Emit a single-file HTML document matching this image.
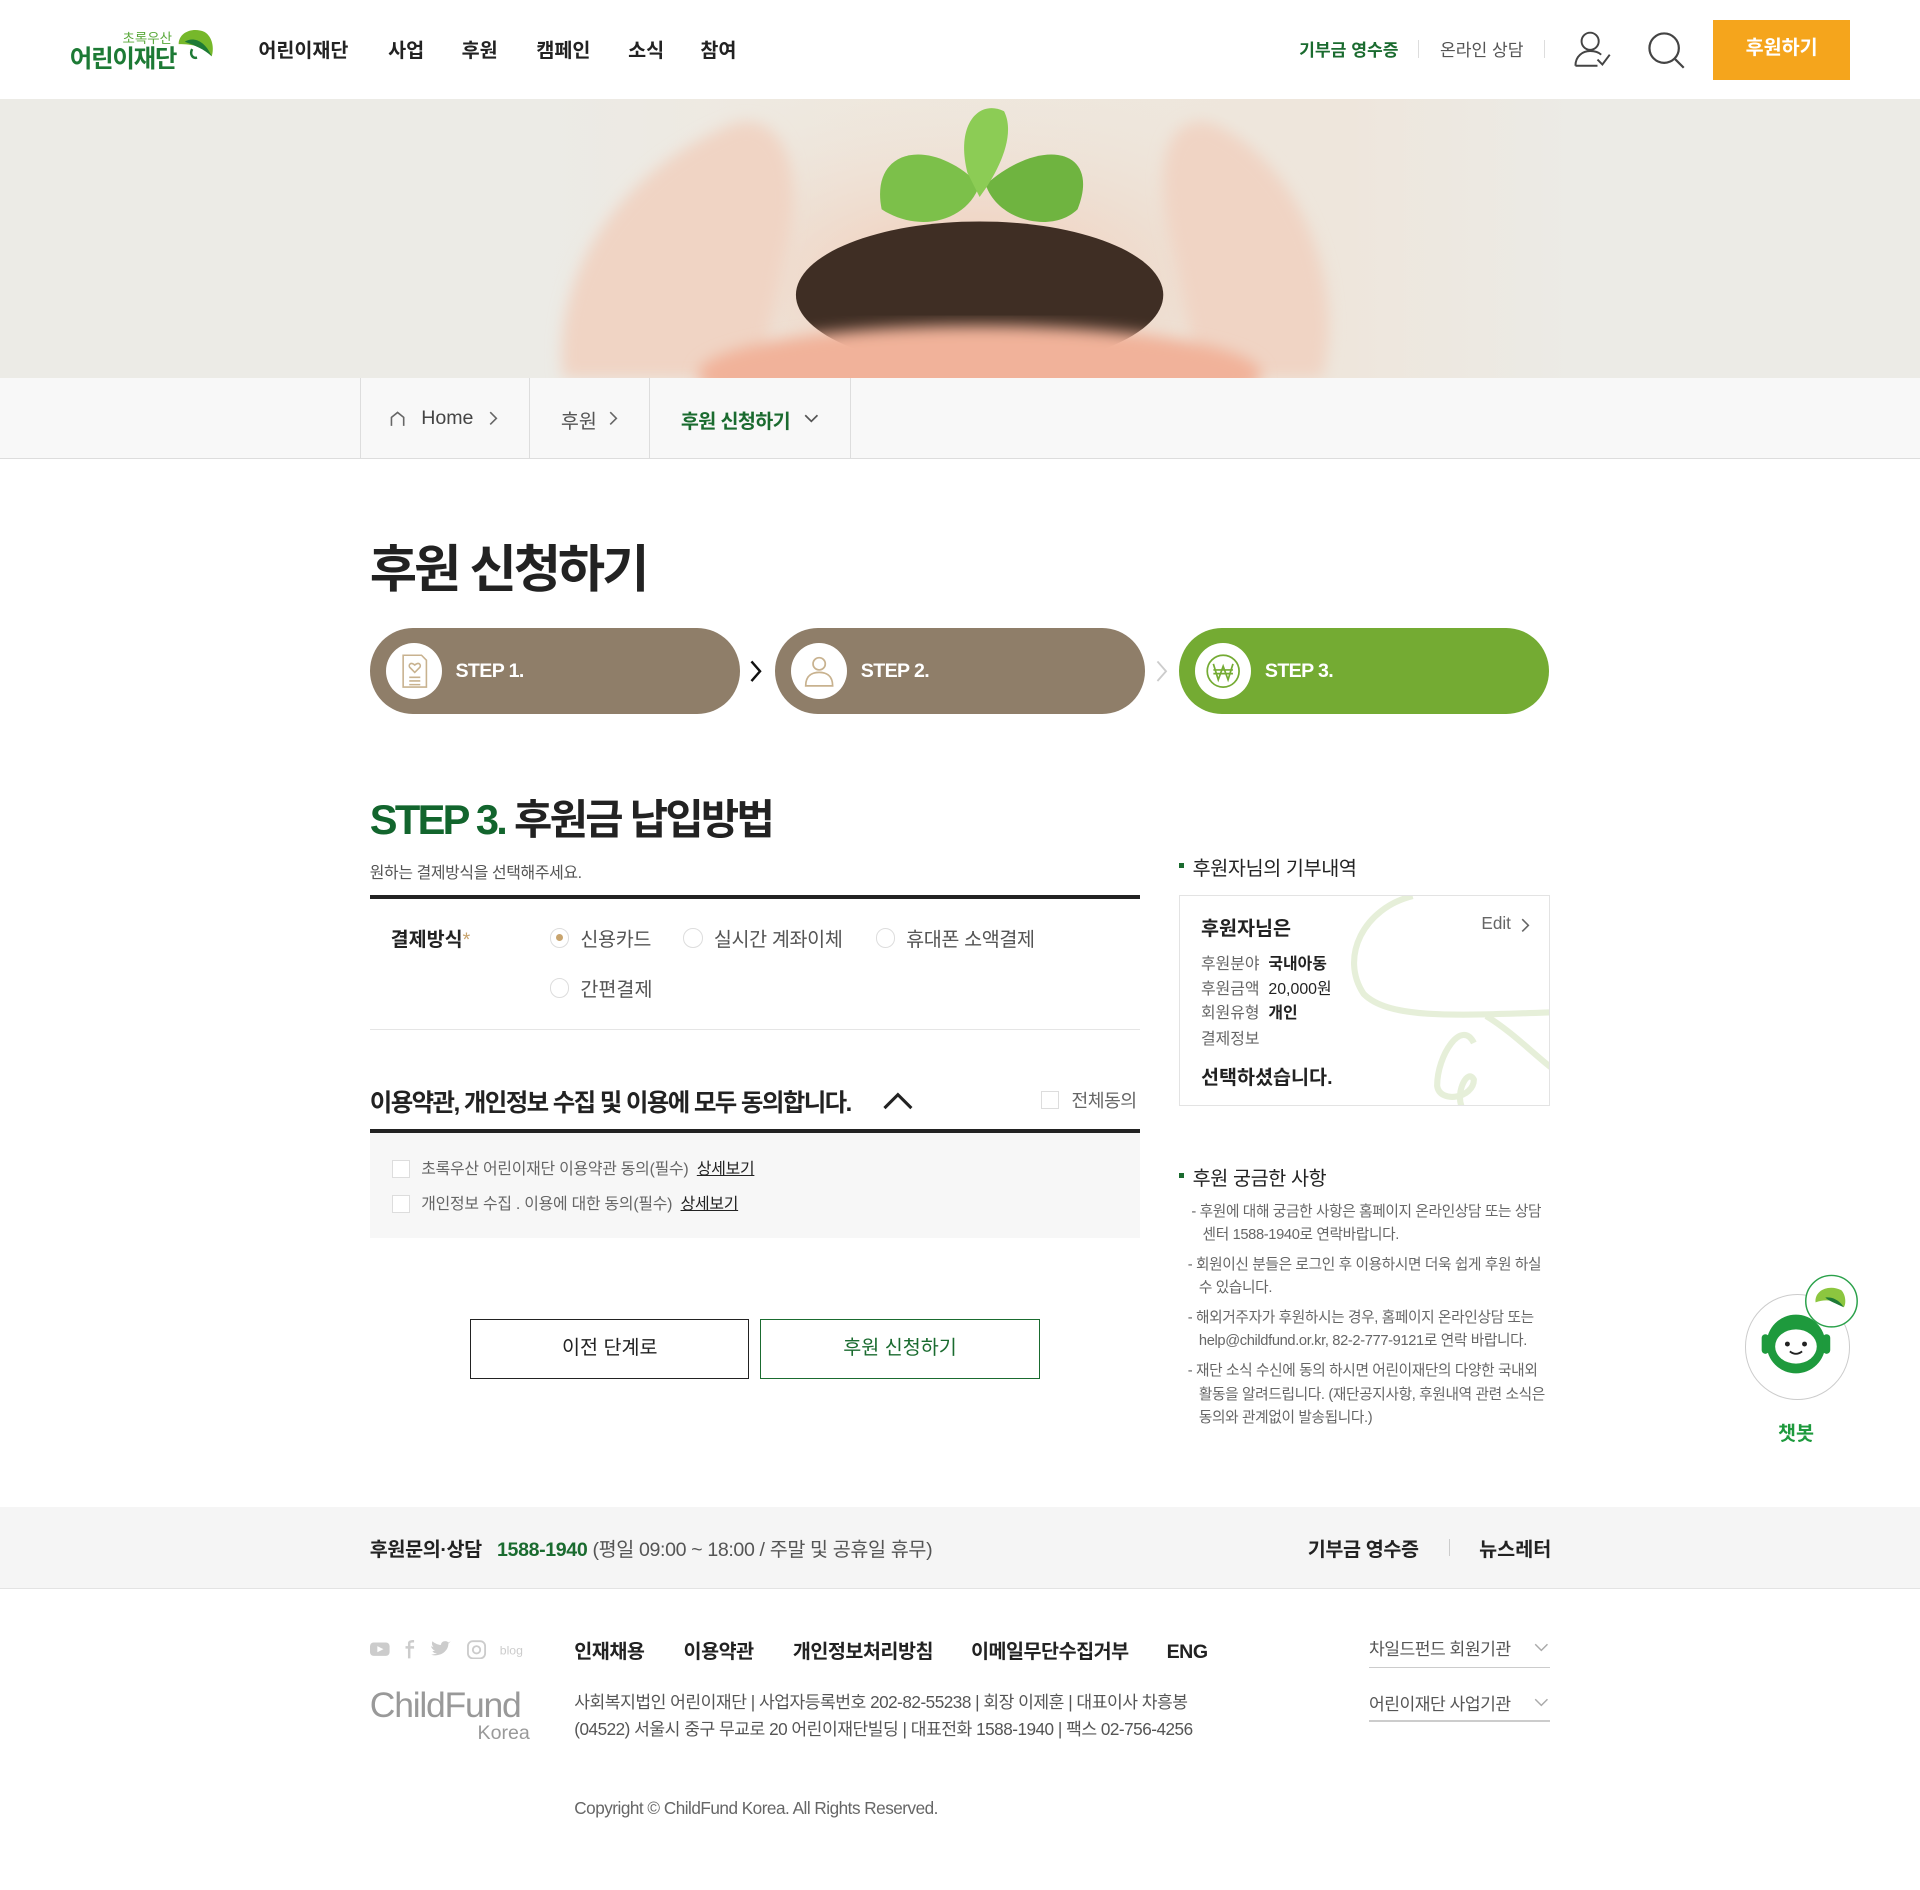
<!DOCTYPE html>
<html><head><meta charset="utf-8"><style>
*{margin:0;padding:0;box-sizing:border-box}
html,body{width:1920px;height:1890px;overflow:hidden;background:#fff}
#w{zoom:1.22449;width:1568px;height:1544px;position:relative;font-family:"Liberation Sans","Noto Sans CJK KR",sans-serif;color:#222}
.a{position:absolute;white-space:nowrap}
.nav{font-size:16px;font-weight:bold;top:28px;color:#222}
.pill{position:absolute;top:513px;height:70px;width:302px;border-radius:35px;background:#8f7e69}
.pill .c{position:absolute;left:13px;top:12px;width:46px;height:46px;border-radius:50%;background:#fff}
.pill .t{position:absolute;left:70px;top:26px;color:#fff;font-weight:bold;font-size:16px;letter-spacing:-0.5px}
.rad{position:absolute;width:16px;height:16px;border:1px solid #ddd;border-radius:50%;background:#fff}
.cb{position:absolute;width:15px;height:15px;border:1px solid #ddd;background:#fff}
.q{font-size:12px;color:#666;line-height:19px;letter-spacing:-0.3px}
</style></head><body><div id="w">
<!-- header -->
<div class="a" style="left:100px;top:22px;font-size:11px;color:#59a83a">초록우산</div>
<div class="a" style="left:57px;top:33px;font-size:20px;font-weight:bold;color:#1d7a35;letter-spacing:-1px">어린이재단</div>
<svg class="a" style="left:143px;top:22px" width="34" height="28"><path d="M3 14 C3 4 15 0 24 4 C31 8 32 18 30 24 C25 16 14 14 3 14Z" fill="#76b82a"/><path d="M8 12 C14 8 24 10 30 24 C24 18 16 15 8 12Z" fill="#1d7a35"/><path d="M14 18 C12 22 14 26 18 25" stroke="#1d7a35" stroke-width="2" fill="none"/></svg>
<div class="a nav" style="left:211px">어린이재단</div>
<div class="a nav" style="left:317px">사업</div>
<div class="a nav" style="left:377px">후원</div>
<div class="a nav" style="left:438px">캠페인</div>
<div class="a nav" style="left:513px">소식</div>
<div class="a nav" style="left:572px">참여</div>
<div class="a" style="left:1061px;top:29px;font-size:14px;font-weight:bold;color:#1a6b2f">기부금 영수증</div>
<div class="a" style="left:1158px;top:33px;width:1px;height:14px;background:#ddd"></div>
<div class="a" style="left:1176px;top:29px;font-size:14px;color:#555">온라인 상담</div>
<div class="a" style="left:1261px;top:33px;width:1px;height:14px;background:#ddd"></div>
<svg class="a" style="left:1285px;top:24px" width="32" height="32" fill="none" stroke="#444" stroke-width="1.6"><circle cx="14" cy="10" r="7"/><path d="M2 30 C2 22 8 18 14 18 C18 18 21 19 23 21"/><path d="M2 30 H20"/><path d="M20 25 L24 29 L30 21"/></svg>
<svg class="a" style="left:1345px;top:25px" width="32" height="32" fill="none" stroke="#444" stroke-width="1.8"><circle cx="14" cy="14" r="12"/><path d="M23 23 L30 30"/></svg>
<div class="a" style="left:1399px;top:16px;width:112px;height:49px;background:#f5a51c;color:#fff;font-weight:bold;font-size:16px;text-align:center;line-height:47px">후원하기</div>
<!-- hero -->
<div class="a" style="left:0;top:81px;width:1568px;height:228px;overflow:hidden;background:linear-gradient(90deg,#ecebe6 0%,#ecebe6 28%,#efe8de 45%,#eee6dc 70%,#ecebe6 82%,#ecebe6 100%)">
<svg width="1568" height="228">
<defs><radialGradient id="sk" cx="50%" cy="50%" r="50%"><stop offset="0" stop-color="#f2c6b0"/><stop offset="1" stop-color="#ece6dc" stop-opacity="0"/></radialGradient>
<filter id="bl"><feGaussianBlur stdDeviation="6"/></filter></defs>
<ellipse cx="790" cy="150" rx="340" ry="170" fill="url(#sk)"/>
<g filter="url(#bl)">
<path d="M460 228 C450 150 500 60 600 20 C640 10 660 60 640 130 C630 180 620 228 620 228Z" fill="#f0d4c4"/>
<path d="M1080 228 C1100 150 1060 50 990 20 C950 10 940 60 960 130 C970 180 980 228 980 228Z" fill="#f0d4c4"/>
</g>
<ellipse cx="800" cy="160" rx="150" ry="60" fill="#3f2e24"/>
<ellipse cx="800" cy="225" rx="230" ry="40" fill="#f1b29a" filter="url(#bl)"/>
<path d="M720 90 C710 40 760 30 800 70 C790 100 750 110 720 90Z" fill="#7cc04a"/>
<path d="M880 90 C900 40 850 30 805 70 C815 100 860 110 880 90Z" fill="#6fb440"/>
<path d="M790 60 C780 20 800 0 820 10 C830 30 815 60 800 80Z" fill="#8ccc55"/>
</svg></div>
<!-- breadcrumb -->
<div class="a" style="left:0;top:309px;width:1568px;height:66px;background:#f8f8f8;border-bottom:1px solid #ddd"></div>
<div class="a" style="left:294px;top:309px;width:1px;height:65px;background:#ddd"></div>
<div class="a" style="left:432px;top:309px;width:1px;height:65px;background:#ddd"></div>
<div class="a" style="left:530px;top:309px;width:1px;height:65px;background:#ddd"></div>
<div class="a" style="left:694px;top:309px;width:1px;height:65px;background:#ddd"></div>
<svg class="a" style="left:318px;top:335px" width="14" height="14" fill="none" stroke="#666" stroke-width="1.3"><path d="M2 13 V6 L7 2 L12 6 V13"/></svg>
<div class="a" style="left:344px;top:332px;font-size:16px;color:#444">Home</div>
<svg class="a" style="left:399px;top:336px" width="8" height="12" fill="none" stroke="#666" stroke-width="1.3"><path d="M1 1 L6 6 L1 11"/></svg>
<div class="a" style="left:458px;top:331px;font-size:16px;color:#555">후원</div>
<svg class="a" style="left:497px;top:336px" width="8" height="12" fill="none" stroke="#666" stroke-width="1.3"><path d="M1 1 L6 6 L1 11"/></svg>
<div class="a" style="left:556px;top:331px;font-size:16px;color:#1a6b2f;font-weight:bold;letter-spacing:-0.5px">후원 신청하기</div>
<svg class="a" style="left:657px;top:338px" width="12" height="8" fill="none" stroke="#555" stroke-width="1.4"><path d="M1 1 L6 6 L11 1"/></svg>
<!-- title -->
<div class="a" style="left:302px;top:430px;font-size:42px;font-weight:bold;color:#222;letter-spacing:-2.5px">후원 신청하기</div>
<div class="pill" style="left:302px"><div class="c"><svg width="46" height="46" fill="none" stroke="#c8b28f" stroke-width="1.3"><path d="M14 10 H29 L33 14 V36 H14Z"/><path d="M19 28 H28 M19 31 H28 M19 34 H28"/><path d="M23.5 24 L19.5 20 C18 18 20 15 23.5 18 C27 15 29 18 27.5 20Z"/></svg></div><div class="t">STEP 1.</div></div>
<div class="pill" style="left:633px"><div class="c"><svg width="46" height="46" fill="none" stroke="#c8b28f" stroke-width="1.4"><circle cx="23" cy="17" r="5"/><path d="M12 35 C12 26 18 24 23 24 C28 24 34 26 34 35Z"/></svg></div><div class="t">STEP 2.</div></div>
<div class="pill" style="left:963px;background:#74ab33"><div class="c"><svg width="46" height="46" fill="none" stroke="#74ab33" stroke-width="1.4"><circle cx="23" cy="23" r="13"/><path d="M15 17 L19 30 L23 19 L27 30 L31 17 M15 22 H31 M15 25 H31"/></svg></div><div class="t">STEP 3.</div></div>
<svg class="a" style="left:612px;top:538px" width="12" height="20" fill="none" stroke="#111" stroke-width="2"><path d="M2 2 L9 10 L2 18"/></svg>
<svg class="a" style="left:943px;top:538px" width="12" height="20" fill="none" stroke="#ccc" stroke-width="1.5"><path d="M2 2 L9 10 L2 18"/></svg>
<!-- step3 -->
<div class="a" style="left:302px;top:642px;font-size:34px;font-weight:bold;letter-spacing:-2.2px"><span style="color:#12652d">STEP 3.</span> 후원금 납입방법</div>
<div class="a" style="left:302px;top:702px;font-size:13px;color:#555;letter-spacing:-0.3px">원하는 결제방식을 선택해주세요.</div>
<div class="a" style="left:302px;top:731px;width:629px;height:3px;background:#222"></div>
<div class="a" style="left:319px;top:754px;font-size:16px;font-weight:bold;color:#222">결제방식<span style="color:#c8a46e;font-weight:normal">*</span></div>
<div class="rad" style="left:449px;top:758px"><div style="position:absolute;left:4px;top:4px;width:6px;height:6px;border-radius:50%;background:#c8a46e"></div></div>
<div class="a" style="left:474px;top:754px;font-size:16px;color:#555;letter-spacing:-0.3px">신용카드</div>
<div class="rad" style="left:558px;top:758px"></div>
<div class="a" style="left:583px;top:754px;font-size:16px;color:#555;letter-spacing:-0.3px">실시간 계좌이체</div>
<div class="rad" style="left:715px;top:758px"></div>
<div class="a" style="left:740px;top:754px;font-size:16px;color:#555;letter-spacing:-0.3px">휴대폰 소액결제</div>
<div class="rad" style="left:449px;top:799px"></div>
<div class="a" style="left:474px;top:795px;font-size:16px;color:#555">간편결제</div>
<div class="a" style="left:302px;top:840px;width:629px;height:1px;background:#e5e5e5"></div>
<div class="a" style="left:302px;top:885px;font-size:20px;font-weight:bold;color:#222;letter-spacing:-1.3px">이용약관, 개인정보 수집 및 이용에 모두 동의합니다.</div>
<svg class="a" style="left:720px;top:891px" width="26" height="16" fill="none" stroke="#222" stroke-width="2.5"><path d="M2 14 L13 3 L24 14"/></svg>
<div class="cb" style="left:850px;top:891px"></div>
<div class="a" style="left:875px;top:888px;font-size:15px;color:#666;letter-spacing:-0.5px">전체동의</div>
<div class="a" style="left:302px;top:922px;width:629px;height:3px;background:#222"></div>
<div class="a" style="left:302px;top:925px;width:629px;height:86px;background:#f7f7f7"></div>
<div class="cb" style="left:320px;top:947px"></div>
<div class="a" style="left:344px;top:944px;font-size:13px;color:#666;letter-spacing:-0.2px">초록우산 어린이재단 이용약관 동의(필수) &nbsp;<span style="color:#222;text-decoration:underline">상세보기</span></div>
<div class="cb" style="left:320px;top:976px"></div>
<div class="a" style="left:344px;top:973px;font-size:13px;color:#666;letter-spacing:-0.2px">개인정보 수집 . 이용에 대한 동의(필수) &nbsp;<span style="color:#222;text-decoration:underline">상세보기</span></div>
<div class="a" style="left:384px;top:1077px;width:228px;height:49px;border:1px solid #222;text-align:center;line-height:47px;font-size:16px">이전 단계로</div>
<div class="a" style="left:621px;top:1077px;width:228px;height:49px;border:1px solid #1a6b2f;text-align:center;line-height:47px;font-size:16px;color:#1a6b2f">후원 신청하기</div>
<!-- sidebar -->
<div class="a" style="left:963px;top:705px;width:4px;height:4px;background:#1a6b2f"></div>
<div class="a" style="left:974px;top:696px;font-size:16px;color:#222;letter-spacing:-0.3px">후원자님의 기부내역</div>
<div class="a" style="left:963px;top:731px;width:303px;height:172px;border:1px solid #e3e3e3;overflow:hidden">
<svg class="a" style="left:0;top:0" width="303" height="172" fill="none" stroke="#e6efd9" stroke-width="5"><path d="M190 0 C150 10 130 50 150 80 C170 100 220 98 303 95"/><path d="M250 98 C270 110 290 130 303 140"/><path d="M240 120 C230 100 210 130 210 155 C212 170 240 165 240 150 C235 140 225 160 230 172"/></svg>
<div class="a" style="left:17px;top:13px;font-size:16px;font-weight:bold">후원자님은</div>
<div class="a" style="left:246px;top:14px;font-size:14px;color:#666">Edit</div>
<svg class="a" style="left:278px;top:18px" width="8" height="12" fill="none" stroke="#666" stroke-width="1.3"><path d="M1 1 L6 6 L1 11"/></svg>
<div class="a" style="left:17px;top:45px;font-size:13px;color:#666">후원분야 &nbsp;<b style="color:#222">국내아동</b></div>
<div class="a" style="left:17px;top:65px;font-size:13px;color:#666">후원금액 &nbsp;<span style="color:#222">20,000원</span></div>
<div class="a" style="left:17px;top:85px;font-size:13px;color:#666">회원유형 &nbsp;<b style="color:#222">개인</b></div>
<div class="a" style="left:17px;top:106px;font-size:13px;color:#666">결제정보</div>
<div class="a" style="left:17px;top:135px;font-size:16px;font-weight:bold">선택하셨습니다.</div>
</div>
<div class="a" style="left:963px;top:958px;width:4px;height:4px;background:#1a6b2f"></div>
<div class="a" style="left:974px;top:949px;font-size:16px;color:#222;letter-spacing:-0.3px">후원 궁금한 사항</div>
<div class="a q" style="left:973px;top:981px">- 후원에 대해 궁금한 사항은 홈페이지 온라인상담 또는 상담<br>&nbsp;&nbsp;&nbsp;센터 1588-1940로 연락바랍니다.</div>
<div class="a q" style="left:970px;top:1024px">- 회원이신 분들은 로그인 후 이용하시면 더욱 쉽게 후원 하실<br>&nbsp;&nbsp;&nbsp;수 있습니다.</div>
<div class="a q" style="left:970px;top:1067px">- 해외거주자가 후원하시는 경우, 홈페이지 온라인상담 또는<br>&nbsp;&nbsp;&nbsp;help@childfund.or.kr, 82-2-777-9121로 연락 바랍니다.</div>
<div class="a q" style="left:970px;top:1111px">- 재단 소식 수신에 동의 하시면 어린이재단의 다양한 국내외<br>&nbsp;&nbsp;&nbsp;활동을 알려드립니다. (재단공지사항, 후원내역 관련 소식은<br>&nbsp;&nbsp;&nbsp;동의와 관계없이 발송됩니다.)</div>
<!-- chatbot -->
<div class="a" style="left:1425px;top:1057px;width:86px;height:86px;border-radius:50%;border:1px solid #ccc;background:#fff"></div>
<svg class="a" style="left:1436px;top:1040px" width="84" height="90"><circle cx="31" cy="58" r="24" fill="#1e9a3d"/><ellipse cx="31" cy="60" rx="17" ry="14" fill="#fff"/><circle cx="24" cy="58" r="2" fill="#222"/><circle cx="38" cy="58" r="2" fill="#222"/><path d="M26 64 Q31 68 36 64" stroke="#222" fill="none" stroke-width="1.5"/><rect x="3" y="50" width="6" height="16" rx="3" fill="#1e9a3d"/><rect x="53" y="50" width="6" height="16" rx="3" fill="#1e9a3d"/><circle cx="60" cy="23" r="21" fill="#fff" stroke="#2aa14a" stroke-width="1.2"/><path d="M47 24 C46 14 58 9 68 14 C72 18 72 26 70 28 C64 22 55 21 47 24Z" fill="#8cc63f"/><path d="M55 20 C62 19 68 24 70 28 C64 25 58 23 55 20Z" fill="#1e7a35"/></svg>
<div class="a" style="left:1452px;top:1157px;font-size:16px;font-weight:bold;color:#1e9a3d">챗봇</div>
<!-- footer -->
<div class="a" style="left:0;top:1231px;width:1568px;height:67px;background:#f5f5f5;border-bottom:1px solid #e3e3e3"></div>
<div class="a" style="left:302px;top:1252px;font-size:16px;font-weight:bold;letter-spacing:-0.3px">후원문의·상담 &nbsp;&nbsp;<span style="color:#1a6b2f">1588-1940</span> <span style="font-weight:normal;color:#555">(평일 09:00 ~ 18:00 / 주말 및 공휴일 휴무)</span></div>
<div class="a" style="left:1068px;top:1252px;font-size:16px;font-weight:bold;letter-spacing:-0.3px">기부금 영수증</div>
<div class="a" style="left:1183px;top:1257px;width:1px;height:14px;background:#ccc"></div>
<div class="a" style="left:1208px;top:1252px;font-size:16px;font-weight:bold">뉴스레터</div>
<svg class="a" style="left:302px;top:1339px" width="132" height="16" fill="#ccc"><rect x="0" y="2" width="16" height="11" rx="3"/><path d="M6 5 L11 7.5 L6 10Z" fill="#fff"/><path d="M33 15 V7 H36 V5 H33 V3 C33 2 34 2 36 2 V0 C32 0 31 1 31 3 V5 H29 V7 H31 V15Z"/><path d="M50 12 C56 14 64 10 64 3 L66 1 L64 2 C62 0 58 1 58 4 C55 4 52 2 51 1 C50 3 51 5 52 6 L50 5 C50 7 52 8 53 9 L51 9 C52 11 54 11 55 11Z"/><rect x="80" y="1" width="14" height="14" rx="4" fill="none" stroke="#ccc" stroke-width="1.5"/><circle cx="87" cy="8" r="3" fill="none" stroke="#ccc" stroke-width="1.5"/><text x="106" y="12" font-size="10" font-family="Liberation Sans">blog</text></svg>
<div class="a" style="left:469px;top:1335px;font-size:16px;font-weight:bold;letter-spacing:-0.4px">인재채용<span style="margin-left:32px">이용약관</span><span style="margin-left:32px">개인정보처리방침</span><span style="margin-left:31px">이메일무단수집거부</span><span style="margin-left:31px">ENG</span></div>
<div class="a" style="left:1118px;top:1335px;font-size:14px;color:#555;letter-spacing:-0.4px">차일드펀드 회원기관</div>
<svg class="a" style="left:1253px;top:1342px" width="12" height="8" fill="none" stroke="#aaa" stroke-width="1.2"><path d="M1 1 L6 6 L11 1"/></svg>
<div class="a" style="left:1118px;top:1361px;width:148px;height:1px;background:#ccc"></div>
<div class="a" style="left:1118px;top:1380px;font-size:14px;color:#555;letter-spacing:-0.4px">어린이재단 사업기관</div>
<svg class="a" style="left:1253px;top:1387px" width="12" height="8" fill="none" stroke="#aaa" stroke-width="1.2"><path d="M1 1 L6 6 L11 1"/></svg>
<div class="a" style="left:1118px;top:1405px;width:148px;height:1px;background:#ccc"></div>
<div class="a" style="left:302px;top:1376px;font-size:29px;color:#999;letter-spacing:-1px">ChildFund</div>
<div class="a" style="left:390px;top:1406px;font-size:16px;color:#999">Korea</div>
<div class="a" style="left:469px;top:1379px;font-size:14px;color:#555;line-height:22px;letter-spacing:-0.4px">사회복지법인 어린이재단 | 사업자등록번호 202-82-55238 | 회장 이제훈 | 대표이사 차흥봉<br>(04522) 서울시 중구 무교로 20 어린이재단빌딩 | 대표전화 1588-1940 | 팩스 02-756-4256</div>
<div class="a" style="left:469px;top:1468px;font-size:14px;color:#666;letter-spacing:-0.4px">Copyright © ChildFund Korea. All Rights Reserved.</div>
</div></body></html>
